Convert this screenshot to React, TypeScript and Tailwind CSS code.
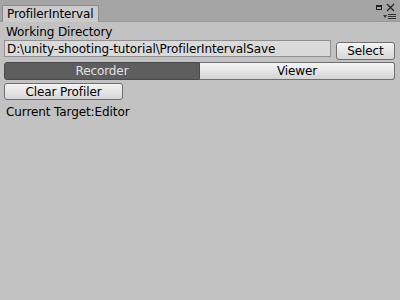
import React from "react";

export default function App() {
  const font = { fontFamily: '"DejaVu Sans", Verdana, sans-serif', letterSpacing: "-0.1px" };
  return (
    <div className="w-[400px] h-[300px] bg-[#c2c2c2] flex flex-col text-[12px] text-black" style={font}>
      <div className="h-[22px] bg-[#a5a5a5] flex items-end relative border-b border-[#999999]">
        <div className="ml-[2px] h-[17px] px-[4px] bg-[#cbcbcb] border border-b-0 border-[#8a8a8a] rounded-t-[2px] flex items-center leading-none -mb-px">
          ProfilerInterval
        </div>
        <div className="absolute right-[5px] top-[3px] flex items-center gap-[4px]">
          <div className="w-[6px] h-[5px] border-[1.5px] border-t-[2px] border-[#222]" />
          <svg width="9" height="9" viewBox="0 0 9 9"><path d="M1 1L8 8M8 1L1 8" stroke="#222" strokeWidth="1.2" /></svg>
        </div>
        <div className="absolute right-[4px] top-[14px] flex items-center gap-[1px]">
          <svg width="4" height="3" viewBox="0 0 4 3"><path d="M0 0H4L2 3Z" fill="#333" /></svg>
          <div className="flex flex-col gap-[1px]">
            <div className="w-[8px] h-[1px] bg-[#333]" />
            <div className="w-[8px] h-[1px] bg-[#333]" />
            <div className="w-[8px] h-[1px] bg-[#333]" />
          </div>
        </div>
      </div>
      <div className="flex flex-col px-[4px]">
        <div className="h-[18px] flex items-center pl-[2px] pt-[1px]">Working Directory</div>
        <div className="flex items-start gap-[5px] h-[20px]">
          <div className="w-[327px] h-[17px] bg-[#dadada] border border-[#8f8f8f] flex items-center pl-[2px] leading-none">
            D:\unity-shooting-tutorial\ProfilerIntervalSave
          </div>
          <div className="w-[59px] h-[18px] mt-[2px] rounded-[3px] border border-[#6f6f6f] bg-gradient-to-b from-[#f5f5f5] to-[#d6d6d6] flex items-center justify-center">
            Select
          </div>
        </div>
        <div className="flex mt-[2px] h-[18px] w-[391px]">
          <div className="flex-1 bg-[#5e5e5e] border border-[#4a4a4a] rounded-l-[3px] text-[#e2e2e2] flex items-center justify-center">
            Recorder
          </div>
          <div className="flex-1 bg-gradient-to-b from-[#f5f5f5] to-[#d4d4d4] border border-l-0 border-[#6f6f6f] rounded-r-[3px] flex items-center justify-center">
            Viewer
          </div>
        </div>
        <div className="mt-[3px] w-[119px] h-[17px] rounded-[3px] border border-[#6f6f6f] bg-gradient-to-b from-[#f5f5f5] to-[#d6d6d6] flex items-center justify-center">
          Clear Profiler
        </div>
        <div className="h-[17px] flex items-center pl-[2px] mt-[3px]">Current Target:Editor</div>
      </div>
    </div>
  );
}
